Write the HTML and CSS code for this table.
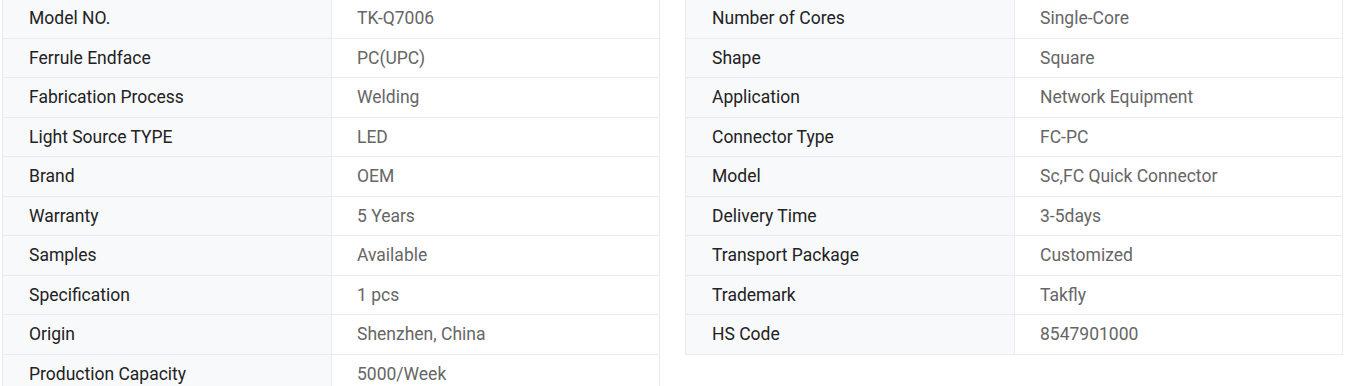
FILE: index.html
```html
<!DOCTYPE html>
<html lang="en">
<head>
<meta charset="utf-8">
<title>Specifications</title>
<link rel="stylesheet" href="styles.css">
</head>
<body>
<div class="wrap">
  <div class="spec">
    <div class="row"><div class="k">Model NO.</div><div class="v">TK-Q7006</div></div>
    <div class="row"><div class="k">Ferrule Endface</div><div class="v">PC(UPC)</div></div>
    <div class="row"><div class="k">Fabrication Process</div><div class="v">Welding</div></div>
    <div class="row"><div class="k">Light Source TYPE</div><div class="v">LED</div></div>
    <div class="row"><div class="k">Brand</div><div class="v">OEM</div></div>
    <div class="row"><div class="k">Warranty</div><div class="v">5 Years</div></div>
    <div class="row"><div class="k">Samples</div><div class="v">Available</div></div>
    <div class="row"><div class="k">Specification</div><div class="v">1 pcs</div></div>
    <div class="row"><div class="k">Origin</div><div class="v">Shenzhen, China</div></div>
    <div class="row"><div class="k">Production Capacity</div><div class="v">5000/Week</div></div>
  </div>
  <div class="spec">
    <div class="row"><div class="k">Number of Cores</div><div class="v">Single-Core</div></div>
    <div class="row"><div class="k">Shape</div><div class="v">Square</div></div>
    <div class="row"><div class="k">Application</div><div class="v">Network Equipment</div></div>
    <div class="row"><div class="k">Connector Type</div><div class="v">FC-PC</div></div>
    <div class="row"><div class="k">Model</div><div class="v">Sc,FC Quick Connector</div></div>
    <div class="row"><div class="k">Delivery Time</div><div class="v">3-5days</div></div>
    <div class="row"><div class="k">Transport Package</div><div class="v">Customized</div></div>
    <div class="row"><div class="k">Trademark</div><div class="v">Takfly</div></div>
    <div class="row"><div class="k">HS Code</div><div class="v">8547901000</div></div>
  </div>
</div>
</body>
</html>
```
FILE: styles.css
```css
html, body {
  margin: 0;
  padding: 0;
  background: #fff;
}
body {
  font-family: Roboto, "Liberation Sans", Arial, sans-serif;
  font-size: 17.5px;
  overflow: hidden;
}
.wrap {
  display: flex;
  align-items: flex-start;
  gap: 25px;
  padding: 0 2px;
  margin-top: -2px;
}
.spec {
  width: 658px;
  box-sizing: border-box;
  border: 1px solid #e8ecf2;
}
.row {
  display: grid;
  grid-template-columns: 329px 1fr;
  height: 39.5px;
  box-sizing: border-box;
  border-bottom: 1px solid #e8ecf2;
}
.row:last-child {
  border-bottom: none;
  height: 38.5px;
}
.k {
  background: #f8f9fb;
  border-right: 1px solid #e8ecf2;
  color: #222;
  padding-left: 26px;
  display: flex;
  align-items: center;
}
.v {
  color: #666;
  padding-left: 25px;
  display: flex;
  align-items: center;
}
```
